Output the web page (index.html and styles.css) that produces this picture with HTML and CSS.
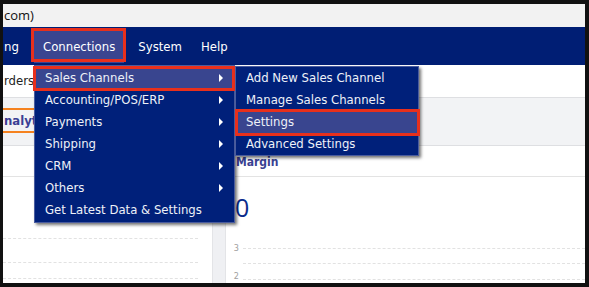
FILE: index.html
```html
<!DOCTYPE html>
<html>
<head>
    <title>Connections menu</title>
    <link rel="stylesheet" href="styles.css">
</head>
<body>
    <div class="window">
        <div class="titlebar">com)</div>
        <div class="navbar">
            <span class="nav-cut">ng</span>
            <div class="nav-item active">
                Connections
                <div class="menu">
                    <div class="menu-item selected has-sub">
                        Sales Channels
                        <div class="menu sub">
                            <div class="menu-item">Add New Sales Channel</div>
                            <div class="menu-item">Manage Sales Channels</div>
                            <div class="menu-item selected">Settings</div>
                            <div class="menu-item">Advanced Settings</div>
                        </div>
                    </div>
                    <div class="menu-item has-sub">Accounting/POS/ERP</div>
                    <div class="menu-item has-sub">Payments</div>
                    <div class="menu-item has-sub">Shipping</div>
                    <div class="menu-item has-sub">CRM</div>
                    <div class="menu-item has-sub">Others</div>
                    <div class="menu-item">Get Latest Data &amp; Settings</div>
                </div>
            </div>
            <div class="nav-item system">System</div>
            <div class="nav-item help">Help</div>
        </div>
        <div class="subbar">rders</div>
        <div class="tabbar">
            <span class="tab">nalyt</span>
        </div>
        <div class="panels">
            <div class="panel left">
                <div class="panel-head"></div>
                <div class="chart">
                    <div class="grid-line l1"></div>
                    <div class="grid-line l2"></div>
                    <div class="grid-line l3"></div>
                </div>
            </div>
            <div class="gutter"></div>
            <div class="panel right">
                <div class="panel-head">Margin</div>
                <div class="big-value">0</div>
                <div class="chart">
                    <div class="grid-row r1"><span class="axis">3</span><div class="grid-line"></div></div>
                    <div class="grid-row r2"><span class="axis"></span><div class="grid-line"></div></div>
                    <div class="grid-row r3"><span class="axis">2</span><div class="grid-line"></div></div>
                </div>
            </div>
        </div>
    </div>
</body>
</html>
```

FILE: styles.css
```css
body {
    margin: 0;
    padding: 4px 4px 4px 3px;
    height: 287px;
    box-sizing: border-box;
    background-color: #111;
    overflow: hidden;
}
.window {
    background-color: white;
    height: 279px;
    overflow: hidden;
    font-family: "DejaVu Sans Condensed", "DejaVu Sans", sans-serif;
    font-size: 12px;
}
.titlebar {
    height: 23px;
    line-height: 23px;
    padding-left: 1px;
    background-color: #f2f2f2;
    font-family: "Open Sans", sans-serif;
    font-size: 13px;
    color: #111;
}
.navbar {
    height: 38px;
    display: flex;
    align-items: center;
    background-color: #001e74;
    color: white;
    font-size: 13px;
}
.nav-cut {
    padding-left: 1px;
    width: 30px;
}
.nav-item {
    position: relative;
    height: 33px;
    line-height: 33px;
    padding: 0 9px;
}
.nav-item.active {
    background-color: #3a4590;
}
.nav-item.active::after {
    content: "";
    position: absolute;
    left: -3px;
    top: -2px;
    right: -2px;
    bottom: 1px;
    border: 3px solid #e8301c;
}
.nav-item.system {
    margin-left: 5px;
}
.nav-item.help {
    margin-left: 1px;
}
.menu {
    position: absolute;
    left: 0;
    top: 35px;
    width: 199px;
    padding: 1px 0;
    background-color: #00207a;
    border: 1px solid #4a5c9e;
    box-shadow: 2px 2px 3px rgba(0, 0, 0, 0.55);
    line-height: 22px;
    z-index: 5;
}
.menu.sub {
    left: 200px;
    top: -1px;
    width: 182px;
    padding: 0;
}
.menu-item {
    position: relative;
    height: 22px;
    padding-left: 10px;
    color: #eef1f8;
    white-space: nowrap;
}
.menu-item.selected {
    background-color: #39458f;
}
.menu-item.has-sub::before {
    content: "";
    position: absolute;
    right: 11px;
    top: 7px;
    border-left: 4px solid white;
    border-top: 4px solid transparent;
    border-bottom: 4px solid transparent;
}
.menu-item.selected::after {
    content: "";
    position: absolute;
    left: -2px;
    top: -1px;
    right: -1px;
    bottom: -2px;
    border: 3px solid #e8301c;
}
.menu.sub .menu-item.selected::after {
    left: -1px;
    top: -2px;
    right: -2px;
    bottom: -3px;
}
.subbar {
    height: 32px;
    line-height: 32px;
    padding-left: 1px;
    font-size: 13px;
    color: #222;
}
.tabbar {
    height: 49px;
    box-sizing: border-box;
    background-color: #f2f3f5;
    border-top: 1px solid #dedfe2;
    border-bottom: 1px solid #dedfe2;
    padding-top: 10px;
}
.tab {
    display: inline-block;
    height: 21px;
    line-height: 21px;
    padding: 0 30px 0 1px;
    border-top: 2px solid #f5821f;
    border-bottom: 2px solid #f5821f;
    font-weight: bold;
    color: #3b3f94;
    font-size: 13px;
}
.panels {
    display: flex;
    height: 140px;
}
.panel.left {
    width: 209px;
}
.gutter {
    width: 12px;
    background-color: #eff0f3;
    border-left: 1px solid #e3e4e7;
}
.panel.right {
    flex: 1;
    border-left: 1px solid #e3e4e7;
}
.panel-head {
    height: 30px;
    line-height: 32px;
    padding-left: 10px;
    border-bottom: 1px solid #e3e3e3;
    font-weight: bold;
    color: #3a4192;
}
.big-value {
    height: 40px;
    line-height: 40px;
    padding-left: 9px;
    margin-top: 10px;
    font-family: "Open Sans", sans-serif;
    font-size: 25px;
    color: #0b2c8c;
}
.chart {
    display: flex;
    flex-direction: column;
}
.panel.left .grid-line {
    flex: none;
    margin-right: 14px;
}
.grid-line.l1 {
    margin-top: 61px;
}
.grid-line.l2 {
    margin-top: 23px;
}
.grid-line.l3 {
    margin-top: 15px;
}
.panel.right .chart {
    padding-top: 13px;
}
.grid-row {
    display: flex;
    align-items: center;
    height: 15px;
}
.grid-row.r1 {
    height: 16px;
}
.grid-row.r3 {
    height: 16px;
}
.grid-row.r3 .axis {
    align-self: flex-start;
    line-height: 10px;
}
.axis {
    width: 13px;
    text-align: right;
    padding-right: 4px;
    font-size: 9px;
    color: #a0a0a0;
}
.grid-line {
    flex: 1;
    border-top: 1px dashed #e2e2e2;
}
```
